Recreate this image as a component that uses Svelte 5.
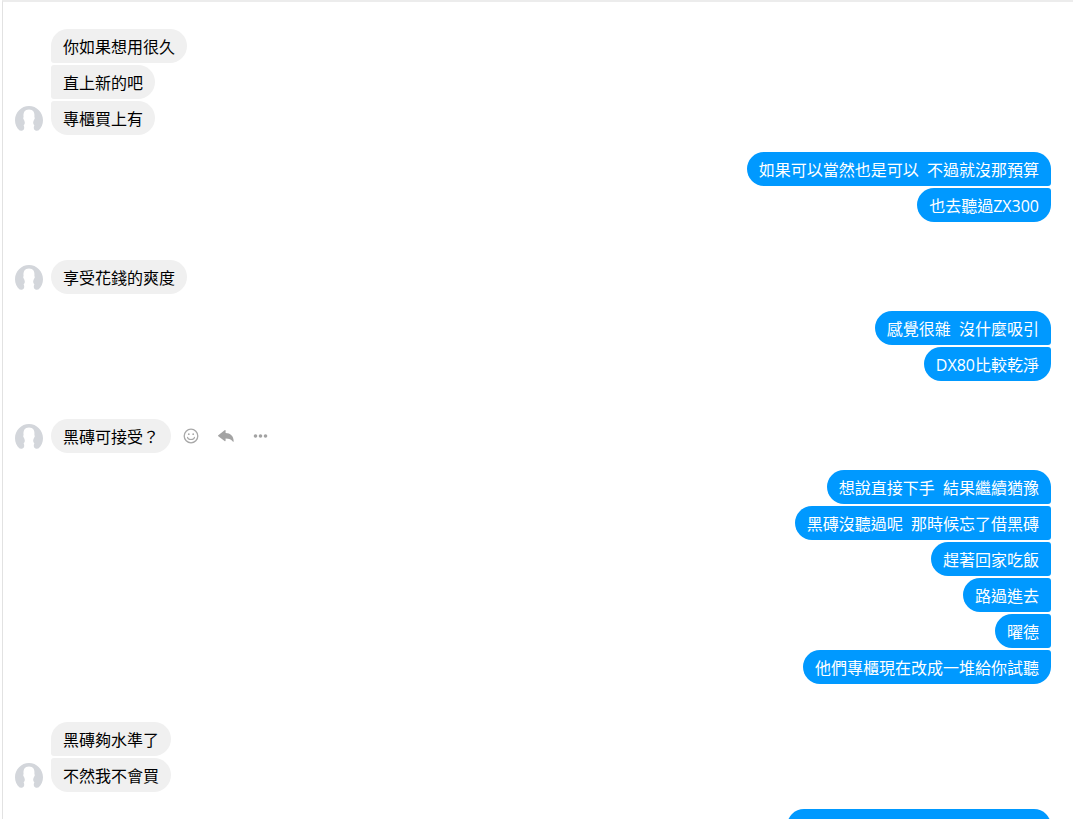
<script lang="ts">
    type Group = {
        mine: boolean
        messages: string[]
        showActions?: boolean
    }

    // two non-breaking spaces, as typed between phrases
    const gap = '\u00a0\u00a0'

    const groups: Group[] = [
        { mine: false, messages: ['你如果想用很久', '直上新的吧', '專櫃買上有'] },
        { mine: true, messages: [`如果可以當然也是可以${gap}不過就沒那預算`, '也去聽過ZX300'] },
        { mine: false, messages: ['享受花錢的爽度'] },
        { mine: true, messages: [`感覺很雜${gap}沒什麼吸引`, 'DX80比較乾淨'] },
        { mine: false, messages: ['黑磚可接受？'], showActions: true },
        {
            mine: true,
            messages: [
                `想說直接下手${gap}結果繼續猶豫`,
                `黑磚沒聽過呢${gap}那時候忘了借黑磚`,
                '趕著回家吃飯',
                '路過進去',
                '曜德',
                '他們專櫃現在改成一堆給你試聽'
            ]
        },
        { mine: false, messages: ['黑磚夠水準了', '不然我不會買'] },
        { mine: true, messages: [''] }
    ]
</script>

<main class="chat">
    {#each groups as group}
    <section class="group" class:mine={group.mine}>
        {#if !group.mine}
        <svg class="avatar" viewBox="0 0 28 28" aria-hidden="true">
            <path fill="#d3d6db" d="M4.6 24.6C1.7 22.1 0 18.3 0 14.2 0 6.4 6.3 0 14 0s14 6.400 14 14.200c0 4.100-1.700 7.900-4.600 10.400-1.600.4-3.400 0-4.200-1.200-.7-1.300-.5-2.800.2-4.200-.8-.5-1.200-1.200-1.200-2.200 0-1.200.5-2 .8-3.200.8-.5 1-2 .4-2.800C19.900 6.500 18.400 3.500 14 3.500S8.100 6.500 8.600 11c-.6.8-.4 2.300.4 2.800.3 1.200.8 2 .8 3.200 0 1-.4 1.700-1.200 2.200.7 1.400.9 2.900.2 4.200-.8 1.200-2.600 1.600-4.200 1.200z" />
        </svg>
        {/if}

        <div class="messages">
            {#each group.messages as message}
            <p class="bubble" class:empty={message == ''}>{message}</p>
            {/each}
        </div>

        {#if group.showActions}
        <div class="actions">
            <button type="button" aria-label="表情">
                <svg viewBox="0 0 16 16">
                    <circle cx="8" cy="8" r="6.8" fill="none" stroke="#a8a8a8" stroke-width="1.3" />
                    <circle cx="5.8" cy="6.2" r="0.9" fill="#a8a8a8" />
                    <circle cx="10.2" cy="6.2" r="0.9" fill="#a8a8a8" />
                    <path d="M4.5 9.3c.7 3 6.3 3 7 0" fill="none" stroke="#a8a8a8" stroke-width="1.1" stroke-linecap="round" />
                </svg>
            </button>
            <button type="button" aria-label="回覆">
                <svg viewBox="0 0 16 16">
                    <path fill="#a3a3a3" d="M.3 7.3 6.6 2.2c.5-.4 1-.2 1 .4v2.3c4.7.1 8 2.9 8.1 8.300 0 .6-.6.8-.9.3-1.400-2.300-3.500-3.100-7.200-3.100v2.200c0 .7-.5.9-1 .5L.3 8.300c-.4-.3-.4-.7 0-1z" />
                </svg>
            </button>
            <button type="button" aria-label="更多">
                <svg viewBox="0 0 16 16" fill="#a3a3a3">
                    <circle cx="2.5" cy="8" r="1.8" />
                    <circle cx="7.5" cy="8" r="1.8" />
                    <circle cx="12.5" cy="8" r="1.8" />
                </svg>
            </button>
        </div>
        {/if}
    </section>
    {/each}
</main>

<style>
    :global(body) {
        margin: 0;
        background: white;
    }

    .chat {
        box-sizing: border-box;
        height: 100vh;
        overflow: hidden;
        margin-left: 2px;
        padding: 27px 22px 0 12px;
        border-left: 1px solid #e2e2e2;
        border-top: 2px solid #ececec;
        font-family: "Open Sans", "Noto Sans CJK TC", sans-serif;
        font-size: 16px;
        line-height: 22px;
    }

    .group {
        display: flex;
        align-items: flex-end;
        margin-bottom: 17px;
    }

    .group.mine {
        justify-content: flex-end;
        margin-bottom: 38px;
    }

    .avatar {
        width: 28px;
        height: 28px;
        margin-right: 8px;
        margin-bottom: 1px;
    }

    .messages {
        display: flex;
        flex-direction: column;
        align-items: flex-start;
        gap: 2px;
    }

    .mine .messages {
        align-items: flex-end;
    }

    .bubble {
        box-sizing: border-box;
        min-height: 34px;
        margin: 0;
        padding: 7px 12px 5px;
        border-radius: 3px 17px 17px 3px;
        background: #f0f0f0;
        color: black;
    }

    .bubble:first-child {
        border-top-left-radius: 17px;
    }

    .bubble:last-child {
        border-bottom-left-radius: 17px;
    }

    .mine .bubble {
        border-radius: 17px 3px 3px 17px;
        background: #0099ff;
        color: white;
    }

    .mine .bubble:first-child {
        border-top-right-radius: 17px;
    }

    .mine .bubble:last-child {
        border-bottom-right-radius: 17px;
    }

    .bubble.empty {
        width: 264px;
    }

    .actions {
        display: flex;
        align-items: center;
        gap: 19px;
        height: 34px;
        margin-left: 12px;
    }

    .actions button {
        width: 16px;
        height: 16px;
        padding: 0;
        border: none;
        background: none;
        cursor: pointer;
    }

    .actions svg {
        display: block;
        width: 16px;
        height: 16px;
    }
</style>
